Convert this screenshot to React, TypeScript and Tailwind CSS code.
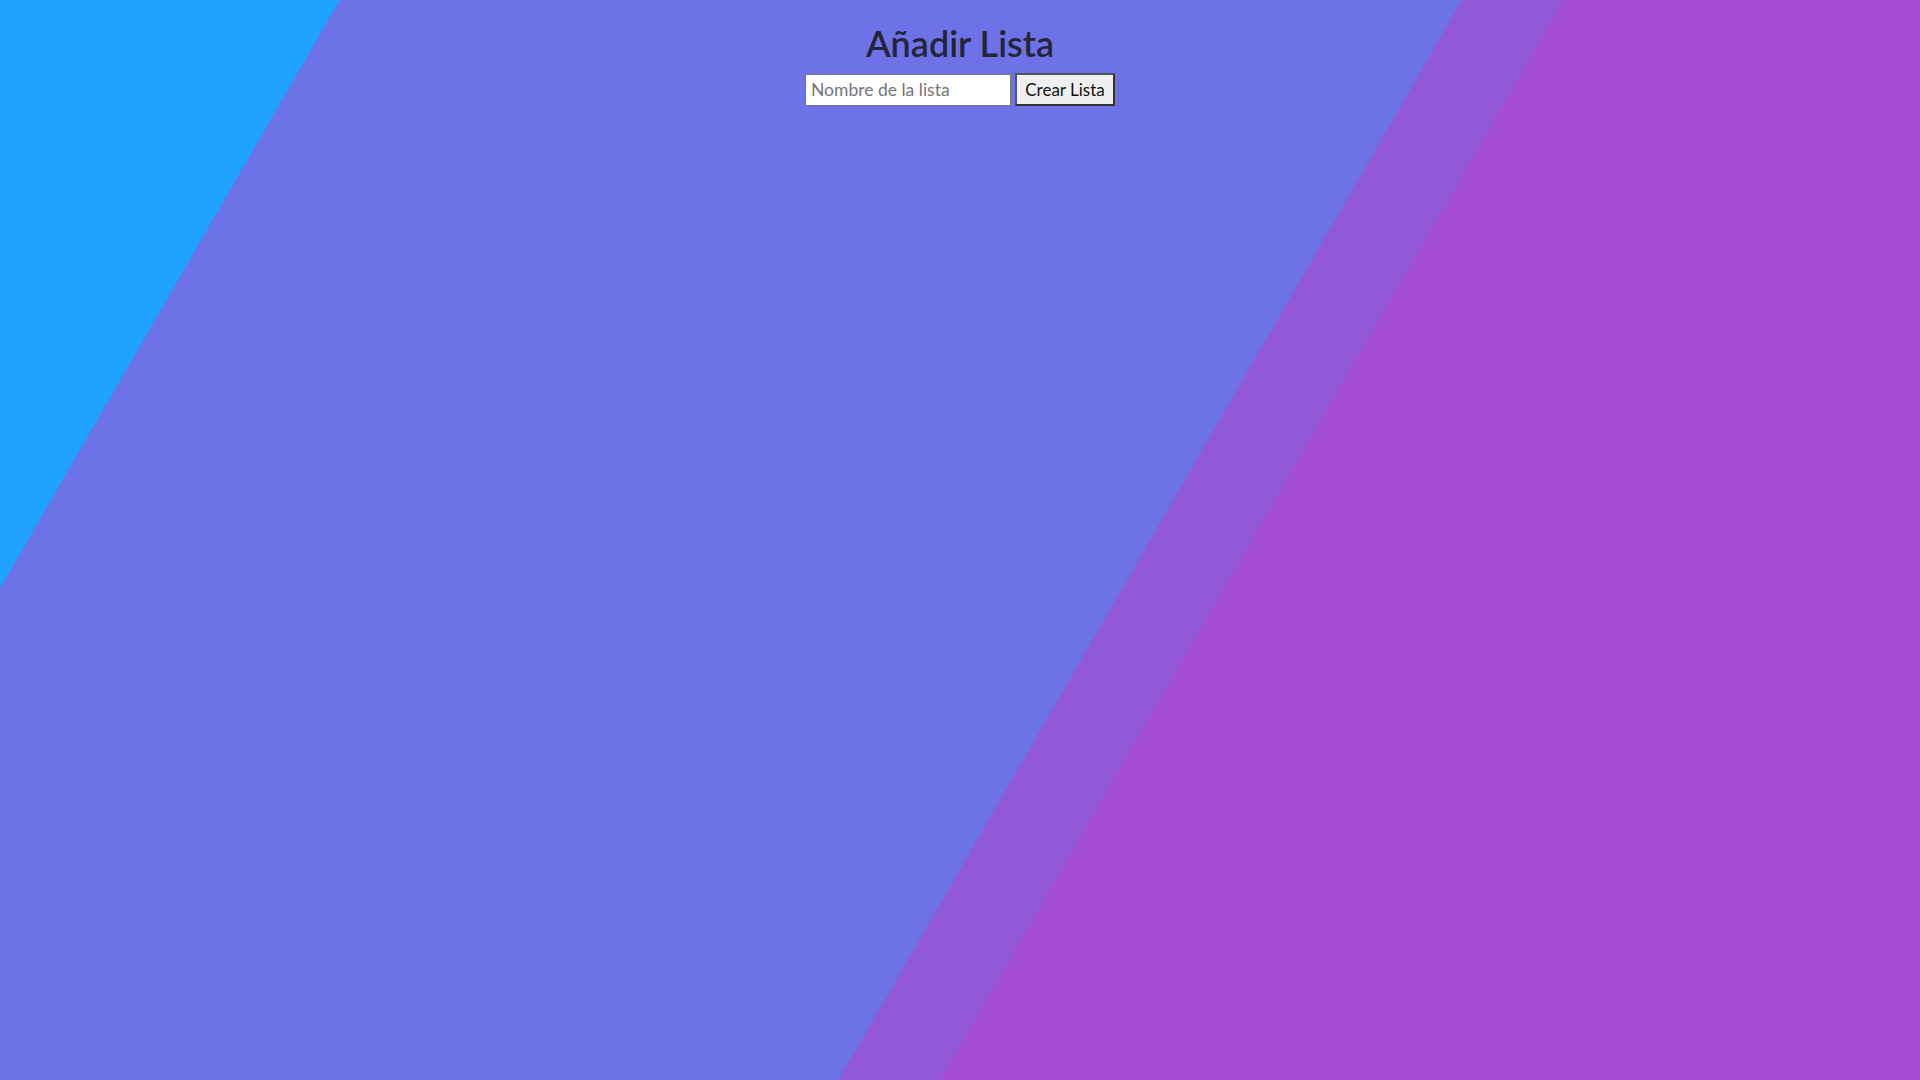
import React, { useState } from 'react';

// Angled colour bands behind the form
const bgBands =
  'bg-[linear-gradient(120deg,#1fa2ff_294px,#6d72e6_294px,#6d72e6_1266px,#9358d8_1266px,#9358d8_1354px,#a44cd2_1354px)]';

export default function App() {
  const [name, setName] = useState('');

  return (
    <div className={`min-h-screen w-full ${bgBands} font-['Lato','Open_Sans',sans-serif]`}>
      <div className="flex flex-col items-center pt-[23px]">
        <h1 className="text-[36px] leading-[40px] font-semibold text-[#25253a]">Añadir Lista</h1>
        <div className="flex items-center gap-[4px] mt-[10px]">
          <input
            type="text"
            value={name}
            onChange={(e) => setName(e.target.value)}
            placeholder="Nombre de la lista"
            className="w-[206px] h-[32px] bg-white border border-[#767676] px-[5px] text-[17.5px] text-black placeholder:text-[#757575] outline-none"
          />
          <button className="h-[33px] w-[100px] bg-[#efefef] border-2 border-[#333] border-t-[#555] border-l-[#555] text-[17px] font-normal text-[#111]">
            Crear Lista
          </button>
        </div>
      </div>
    </div>
  );
}
